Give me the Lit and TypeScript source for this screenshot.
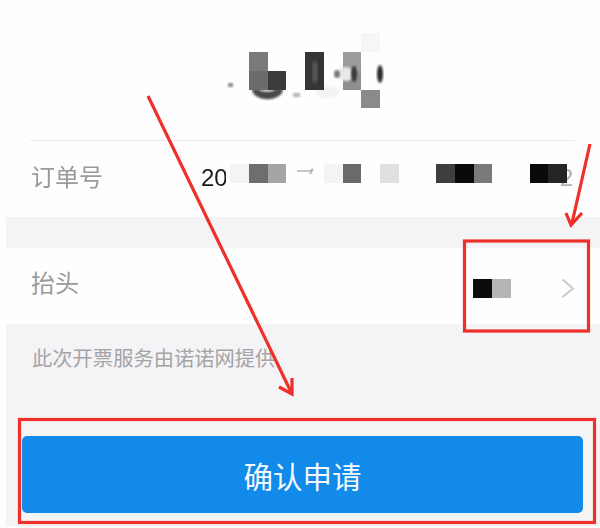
import { LitElement, html, css, svg } from "lit";
import { customElement } from "lit/decorators.js";

type Tile = [number, number, number, number, string];

const heroTiles: Tile[] = [
  [361, 33, 19, 19, "#f6f6f8"],
  [249, 52, 19, 19, "#7a7a7c"],
  [249, 71, 19, 19, "#6b6b6d"],
  [268, 71, 18, 19, "#3b3b3d"],
  [305, 52, 19, 38, "#353537"],
  [343, 52, 18, 19, "#9c9c9e"],
  [343, 71, 18, 19, "#8f8f91"],
  [361, 90, 19, 18, "#8a8a8c"],
];

const orderTiles: Tile[] = [
  [226, 164, 4, 19, "#fefefe"],
  [230, 164, 19, 19, "#f4f4f6"],
  [249, 164, 19, 19, "#6e6e70"],
  [268, 164, 18, 19, "#a5a5a7"],
  [324, 164, 19, 19, "#f4f4f6"],
  [343, 164, 18, 19, "#6a6a6c"],
  [380, 164, 19, 19, "#e0e0e2"],
  [436, 164, 19, 19, "#3e3e40"],
  [455, 164, 19, 19, "#0a0a0c"],
  [474, 164, 18, 19, "#79797b"],
  [530, 164, 18, 19, "#0a0a0c"],
  [548, 164, 19, 19, "#252527"],
];

const rect = (t: Tile) =>
  svg`<rect x=${t[0]} y=${t[1]} width=${t[2]} height=${t[3]} fill=${t[4]}></rect>`;

@customElement("app-root")
export class AppRoot extends LitElement {
  static styles = css`
    :host {
      display: block;
      position: relative;
      width: 600px;
      height: 528px;
      overflow: hidden;
      background: #fefefe;
      font-family: "Liberation Sans", "Noto Sans CJK SC", sans-serif;
    }
    .page {
      display: flex;
      flex-direction: column;
      height: 526px;
      filter: blur(0.45px);
    }
    .hero {
      display: block;
      width: 600px;
      height: 140px;
    }
    .divider {
      height: 1px;
      margin: 0 25px 0 30px;
      background: #ececee;
    }
    .order {
      position: relative;
      display: flex;
      align-items: center;
      height: 76px;
      padding: 0 0 2px 31px;
      box-sizing: border-box;
    }
    .label {
      width: 170px;
      flex: none;
      font-size: 24px;
      line-height: 32px;
      color: #9a9a9c;
    }
    .num {
      flex: none;
      font-size: 24px;
      color: #1a1a1a;
    }
    .order-mask {
      display: block;
      width: 374px;
      height: 76px;
      position: absolute;
      left: 226px;
      top: 0;
    }
    .panel {
      flex: 1;
      display: flex;
      flex-direction: column;
      margin-left: 6px;
      background: #f4f3f6;
    }
    .band {
      height: 31px;
    }
    .title-row {
      display: flex;
      align-items: center;
      height: 76px;
      margin-left: -6px;
      padding: 0 25px 0 31px;
      background: #fefefe;
    }
    .title-row .label {
      width: 442px;
      margin-top: -4px;
    }
    .swatches {
      display: flex;
      margin-top: 5px;
    }
    .swatches i {
      display: block;
      width: 19px;
      height: 19px;
    }
    .swatches .a {
      background: #0c0c0e;
    }
    .swatches .b {
      background: #b5b5b7;
    }
    .chev {
      display: block;
      width: 14px;
      height: 20px;
      margin: 4px 0 0 50px;
    }
    .note {
      margin: 22px 0 0 26px;
      font-size: 20.3px;
      line-height: 26px;
      color: #a4a4a6;
    }
    .action {
      display: flex;
      align-items: center;
      justify-content: center;
      width: 561px;
      height: 77px;
      margin: 64px 0 0 16px;
      border-radius: 5px;
      background: #118ae9;
      font-size: 29.5px;
      color: #f4f9fe;
    }
    .marks {
      position: absolute;
      left: 0;
      top: 0;
      width: 600px;
      height: 528px;
      pointer-events: none;
    }
  `;

  render() {
    return html`
      <div class="page">
        <svg class="hero" viewBox="0 0 600 140" aria-hidden="true">
          <defs>
            <filter id="s"><feGaussianBlur stdDeviation="2"></feGaussianBlur></filter>
            <filter id="m"><feGaussianBlur stdDeviation="1"></feGaussianBlur></filter>
          </defs>
          <path d="M252 89a15 10 0 0 0 31 0z" fill="#48484a" filter="url(#m)"></path>
          <path d="M259 89a8 3 0 0 0 16 0z" fill="#d8d8da" filter="url(#m)"></path>
          <ellipse cx="327" cy="92" rx="12" ry="6" fill="#f2f2f2" filter="url(#m)"></ellipse>
          ${heroTiles.map((t) => rect(t))}
          <rect x="313" y="62" width="4" height="20" fill="#6a6a6c" filter="url(#s)"></rect>
          <ellipse cx="346" cy="74" rx="8" ry="7" fill="#e8e8e8" filter="url(#m)"></ellipse>
          <ellipse cx="354" cy="74" rx="3" ry="8" fill="#38383a" filter="url(#m)"></ellipse>
          <ellipse cx="337" cy="74" rx="3" ry="4" fill="#777779" filter="url(#m)"></ellipse>
          <ellipse cx="380" cy="74" rx="3" ry="9" fill="#2c2c2e" filter="url(#m)"></ellipse>
          <rect x="228" y="83" width="5" height="4" fill="#8a8a8c" filter="url(#m)"></rect>
          <rect x="293" y="93" width="7" height="4" fill="#b5b5b7" filter="url(#m)"></rect>
        </svg>
        <div class="divider"></div>
        <div class="order">
          <span class="label">订单号</span>
          <span class="num">20</span>
          <svg class="order-mask" viewBox="226 141 374 76" aria-hidden="true">
            <text x="560" y="186" font-size="24" fill="#b0b0b2" font-family="Liberation Sans">2</text>
            <path d="M297 171h13l3-2-3 5" fill="none" stroke="#b5b5b7" stroke-width="1.6"></path>
            ${orderTiles.map((t) => rect(t))}
          </svg>
        </div>
        <div class="panel">
          <div class="band"></div>
          <div class="title-row">
            <span class="label">抬头</span>
            <div class="swatches"><i class="a"></i><i class="b"></i></div>
            <svg class="chev" viewBox="0 0 14 20" aria-hidden="true">
              <path d="M1.5 1.5 12 10.5 1.5 19" fill="none" stroke="#c9c9cb" stroke-width="2"></path>
            </svg>
          </div>
          <div class="note">此次开票服务由诺诺网提供</div>
          <div class="action">确认申请</div>
        </div>
      </div>
      <svg class="marks" viewBox="0 0 600 528" aria-hidden="true">
        <g fill="none" stroke="#ee2f2a" stroke-width="3.2">
          <rect x="464.5" y="241" width="124" height="90"></rect>
          <rect x="19.5" y="419.5" width="575" height="103"></rect>
          <path d="M148 96 292 394"></path>
          <path d="M279 387 292 394 292 378"></path>
          <path d="M590 144 572 223"></path>
          <path d="M566 213 571 225 582 213"></path>
        </g>
      </svg>
    `;
  }
}
